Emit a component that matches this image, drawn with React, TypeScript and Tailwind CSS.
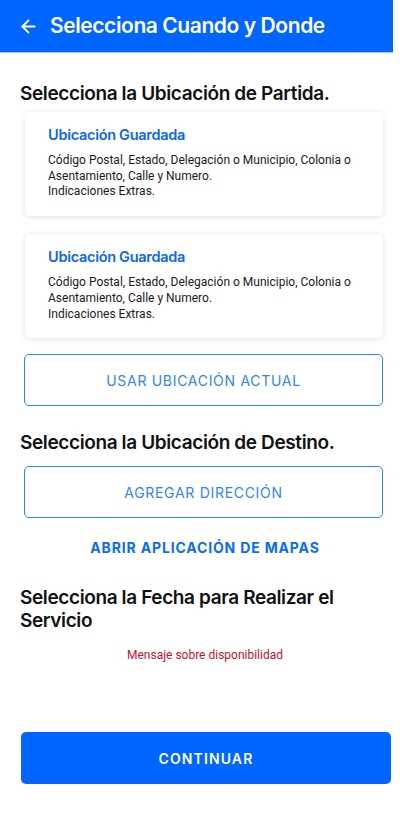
import { ArrowLeft } from "lucide-react";

const heading = "font-['Inter',sans-serif]";
const body = "font-['Roboto',sans-serif]";

function SavedCard() {
  return (
    <div className="ml-[25px] w-[358px] rounded-[5px] bg-white px-[23px] pt-[13px] pb-[16px] shadow-[0_1px_6px_rgba(0,0,0,0.12)]">
      <p className={`${heading} text-[14.5px] font-semibold leading-5 tracking-[-0.02em] text-[#0a66f0]`}>
        Ubicación Guardada
      </p>
      <p className={`${body} mt-[8px] text-[12px] leading-[15.7px] text-[#1a1a1a]`}>
        Código Postal, Estado, Delegación o Municipio, Colonia o Asentamiento, Calle y Numero.
        <br />
        Indicaciones Extras.
      </p>
    </div>
  );
}

function OutlineButton({ label }: { label: string }) {
  return (
    <button
      className={`${heading} ml-[24px] flex h-[52px] w-[359px] items-center justify-center rounded-[5px] border border-[#2688f2] text-[14px] tracking-[0.05em] text-[#2f86ee]`}
    >
      {label}
    </button>
  );
}

export default function App() {
  return (
    <div className="min-h-[823px] w-[393px] bg-white">
      <header className="flex h-[53px] items-center gap-[11px] border-b border-[#a9c8ff] bg-[#0066ff] pl-[18px]">
        <ArrowLeft size={21} strokeWidth={2.1} className="text-white" />
        <h1 className={`${heading} text-[21px] font-semibold tracking-[-0.02em] text-white`}>
          Selecciona Cuando y Donde
        </h1>
      </header>

      <h2 className={`${heading} mt-[29px] pl-5 text-[19px] font-semibold leading-6 tracking-[-0.02em] text-[#111]`}>
        Selecciona la Ubicación de Partida.
      </h2>
      <div className="mt-[6px] flex flex-col gap-[18px]">
        <SavedCard />
        <SavedCard />
      </div>
      <div className="mt-[16px]">
        <OutlineButton label="USAR UBICACIÓN ACTUAL" />
      </div>

      <h2 className={`${heading} mt-[25px] pl-5 text-[19px] font-semibold leading-6 tracking-[-0.02em] text-[#111]`}>
        Selecciona la Ubicación de Destino.
      </h2>
      <div className="mt-[11px]">
        <OutlineButton label="AGREGAR DIRECCIÓN" />
      </div>
      <p className={`${heading} mt-[20px] pl-[17px] text-center text-[14px] font-bold leading-5 tracking-[0.06em] text-[#0a6cf5]`}>
        ABRIR APLICACIÓN DE MAPAS
      </p>

      <h2 className={`${heading} mt-[28px] pl-5 pr-10 text-[19px] font-semibold leading-[23px] tracking-[-0.02em] text-[#111]`}>
        Selecciona la Fecha para Realizar el Servicio
      </h2>
      <p className={`${body} mt-[15px] pl-[17px] text-center text-[12px] leading-4 text-[#c8102e]`}>
        Mensaje sobre disponibilidad
      </p>

      <button
        className={`${heading} mt-[69px] ml-[21px] flex h-[52px] w-[370px] items-center justify-center rounded-[5px] bg-[#0066ff] text-[14px] font-semibold tracking-[0.08em] text-white`}
      >
        CONTINUAR
      </button>
    </div>
  );
}
